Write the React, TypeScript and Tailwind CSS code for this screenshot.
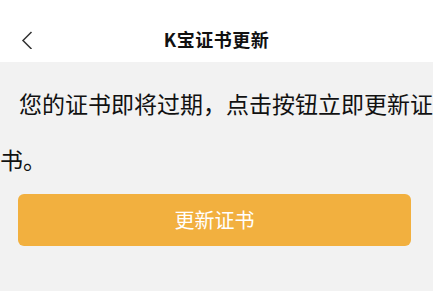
import React from 'react';

export default function App() {
    return (
        <div
            className="h-screen bg-[#f2f2f2] overflow-hidden"
            style={{ fontFamily: '"Noto Sans CJK SC", "Noto Sans", sans-serif' }}
        >
            {/* Header */}
            <div className="h-[62px] bg-white flex items-center justify-center relative">
                <button className="absolute left-[20px] top-[30px] w-[14px] h-[20px] flex items-center justify-center">
                    <svg width="12" height="18" viewBox="0 0 12 18" fill="none">
                        <path d="M10.5 1L2 9.5L10.5 18" stroke="#333" strokeWidth="1.5" />
                    </svg>
                </button>
                <h1 className="text-[18px] font-bold text-[#111] tracking-[0.5px] mt-[16px] leading-[24px]">K宝证书更新</h1>
            </div>

            {/* Content */}
            <p className="mt-[13px] text-[23px] leading-[56px] indent-[19px] text-[#111] whitespace-nowrap overflow-hidden">
                您的证书即将过期，点击按钮立即更新证
            </p>
            <p className="text-[23px] leading-[56px] text-[#111]">书。</p>

            <div className="px-[18px] mt-[7px] pr-[22px]">
                <button className="w-full h-[52px] rounded-[6px] bg-[#f2b03f] text-white text-[20px] flex items-center justify-center">
                    更新证书
                </button>
            </div>
        </div>
    );
}
